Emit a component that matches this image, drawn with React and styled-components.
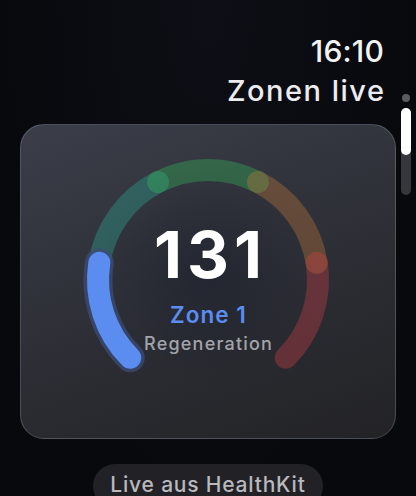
import React from "react";
import styled, { createGlobalStyle } from "styled-components";

const Global = createGlobalStyle`
  html, body { margin: 0; padding: 0; background: #08090d; }
  body { font-family: Inter, "Noto Sans", sans-serif; -webkit-font-smoothing: antialiased; }
`;

const Screen = styled.div`
  position: relative;
  width: 416px;
  height: 496px;
  overflow: hidden;
  background: radial-gradient(ellipse at 50% 0%, #0d0f16 0%, #08090d 70%);
  display: flex;
  flex-direction: column;
  & > * { flex-shrink: 0; }
`;

const Header = styled.header`
  display: flex;
  flex-direction: column;
  align-items: flex-end;
  gap: 5px;
  padding: 33px 32px 0 0;
`;

const Clock = styled.div`
  font-size: 30px;
  line-height: 36px;
  font-weight: 500;
  color: #f2f2f4;
  letter-spacing: 0.2px;
`;

const Title = styled.h1`
  margin: 0 -1.5px 0 0;
  font-size: 29px;
  line-height: 34px;
  font-weight: 500;
  color: #ececef;
  letter-spacing: 1.5px;
`;

const Card = styled.section`
  margin: 16px 0 0 20px;
  width: 376px;
  height: 315px;
  box-sizing: border-box;
  border-radius: 24px;
  border: 1px solid rgba(150, 160, 200, 0.32);
  border-bottom-color: rgba(255, 255, 255, 0.12);
  border-right-color: rgba(255, 255, 255, 0.16);
  background:
    radial-gradient(circle at 50% 48%, rgba(26, 31, 44, 0.55) 0%, rgba(26, 31, 44, 0) 45%),
    linear-gradient(160deg, #3b3e49 0%, #30323a 40%, #28292e 75%, #232326 100%);
  display: grid;
  place-items: center;
  padding-bottom: 3px;
`;

const Gauge = styled.div`
  display: grid;
  width: 250px;
  height: 250px;
  & > * { grid-area: 1 / 1; }
`;

const Readout = styled.div`
  display: flex;
  flex-direction: column;
  align-items: center;
  padding-top: 68px;
`;

const Bpm = styled.div`
  margin-right: -5px;
  font-size: 65px;
  line-height: 64px;
  font-weight: 700;
  color: #ffffff;
  letter-spacing: 5px;
`;

const ZoneName = styled.div`
  margin-top: 15px;
  margin-right: -0.8px;
  font-size: 22.5px;
  line-height: 26px;
  font-weight: 600;
  color: ${(p) => p.$color};
  letter-spacing: 1px;
`;

const ZoneDesc = styled.div`
  margin-top: 5px;
  margin-right: -1.2px;
  font-size: 18px;
  line-height: 22px;
  font-weight: 500;
  color: #a3a4aa;
  letter-spacing: 1.2px;
`;

const Footer = styled.div`
  display: flex;
  justify-content: center;
  padding: 25px 0 0 0;
`;

const Pill = styled.div`
  height: 44px;
  padding: 8px 17px 0 17px;
  box-sizing: border-box;
  border-radius: 22px;
  background: #222226;
  color: #b9b9be;
  font-size: 21px;
  line-height: 26px;
  font-weight: 500;
  letter-spacing: 0.8px;
`;

const ScrollIndicator = styled.div`
  position: absolute;
  right: 5px;
  top: 94px;
  display: flex;
  flex-direction: column;
  align-items: center;
  gap: 6px;
`;

const ScrollDot = styled.div`
  width: 8px;
  height: 8px;
  border-radius: 50%;
  background: #5a5a60;
`;

const ScrollTrack = styled.div`
  width: 10px;
  height: 87px;
  border-radius: 5px;
  background: #36363c;
  display: flex;
  flex-direction: column;
`;

const ScrollThumb = styled.div`
  height: 47px;
  border-radius: 5px;
  background: #ffffff;
`;

const zones = [
  { color: "#5b8cf0", name: "Zone 1" },
  { color: "#2bb39c" },
  { color: "#34c25a" },
  { color: "#c97a3a" },
  { color: "#d8404a" },
];

const C = 125;
const R = 110;
const pt = (deg) => {
  const a = ((deg - 90) * Math.PI) / 180;
  return [C + R * Math.cos(a), C + R * Math.sin(a)];
};
const arc = (a0, a1) => {
  const [x0, y0] = pt(a0);
  const [x1, y1] = pt(a1);
  return `M ${x0.toFixed(2)} ${y0.toFixed(2)} A ${R} ${R} 0 0 1 ${x1.toFixed(2)} ${y1.toFixed(2)}`;
};

function ZoneRing({ active }) {
  const segs = zones.map((z, i) => ({ ...z, d: arc(-135 + i * 54, -135 + (i + 1) * 54), i }));
  const act = segs[active];
  return (
    <svg width="250" height="250" viewBox="0 0 250 250">
      {segs
        .filter((s) => s.i !== active)
        .map((s) => (
          <path key={s.i} d={s.d} fill="none" stroke={s.color} strokeOpacity="0.34" strokeWidth="22" strokeLinecap="round" />
        ))}
      <path d={act.d} fill="none" stroke="#3c4c78" strokeOpacity="0.75" strokeWidth="29" strokeLinecap="round" />
      <path d={act.d} fill="none" stroke={act.color} strokeWidth="22" strokeLinecap="round" />
    </svg>
  );
}

export default function App() {
  return (
    <Screen>
      <Global />
      <Header>
        <Clock>16:10</Clock>
        <Title>Zonen live</Title>
      </Header>
      <ScrollIndicator>
        <ScrollDot />
        <ScrollTrack>
          <ScrollThumb />
        </ScrollTrack>
      </ScrollIndicator>
      <Card>
        <Gauge>
          <ZoneRing active={0} />
          <Readout>
            <Bpm>131</Bpm>
            <ZoneName $color="#5b8cf0">Zone 1</ZoneName>
            <ZoneDesc>Regeneration</ZoneDesc>
          </Readout>
        </Gauge>
      </Card>
      <Footer>
        <Pill>Live aus HealthKit</Pill>
      </Footer>
    </Screen>
  );
}
